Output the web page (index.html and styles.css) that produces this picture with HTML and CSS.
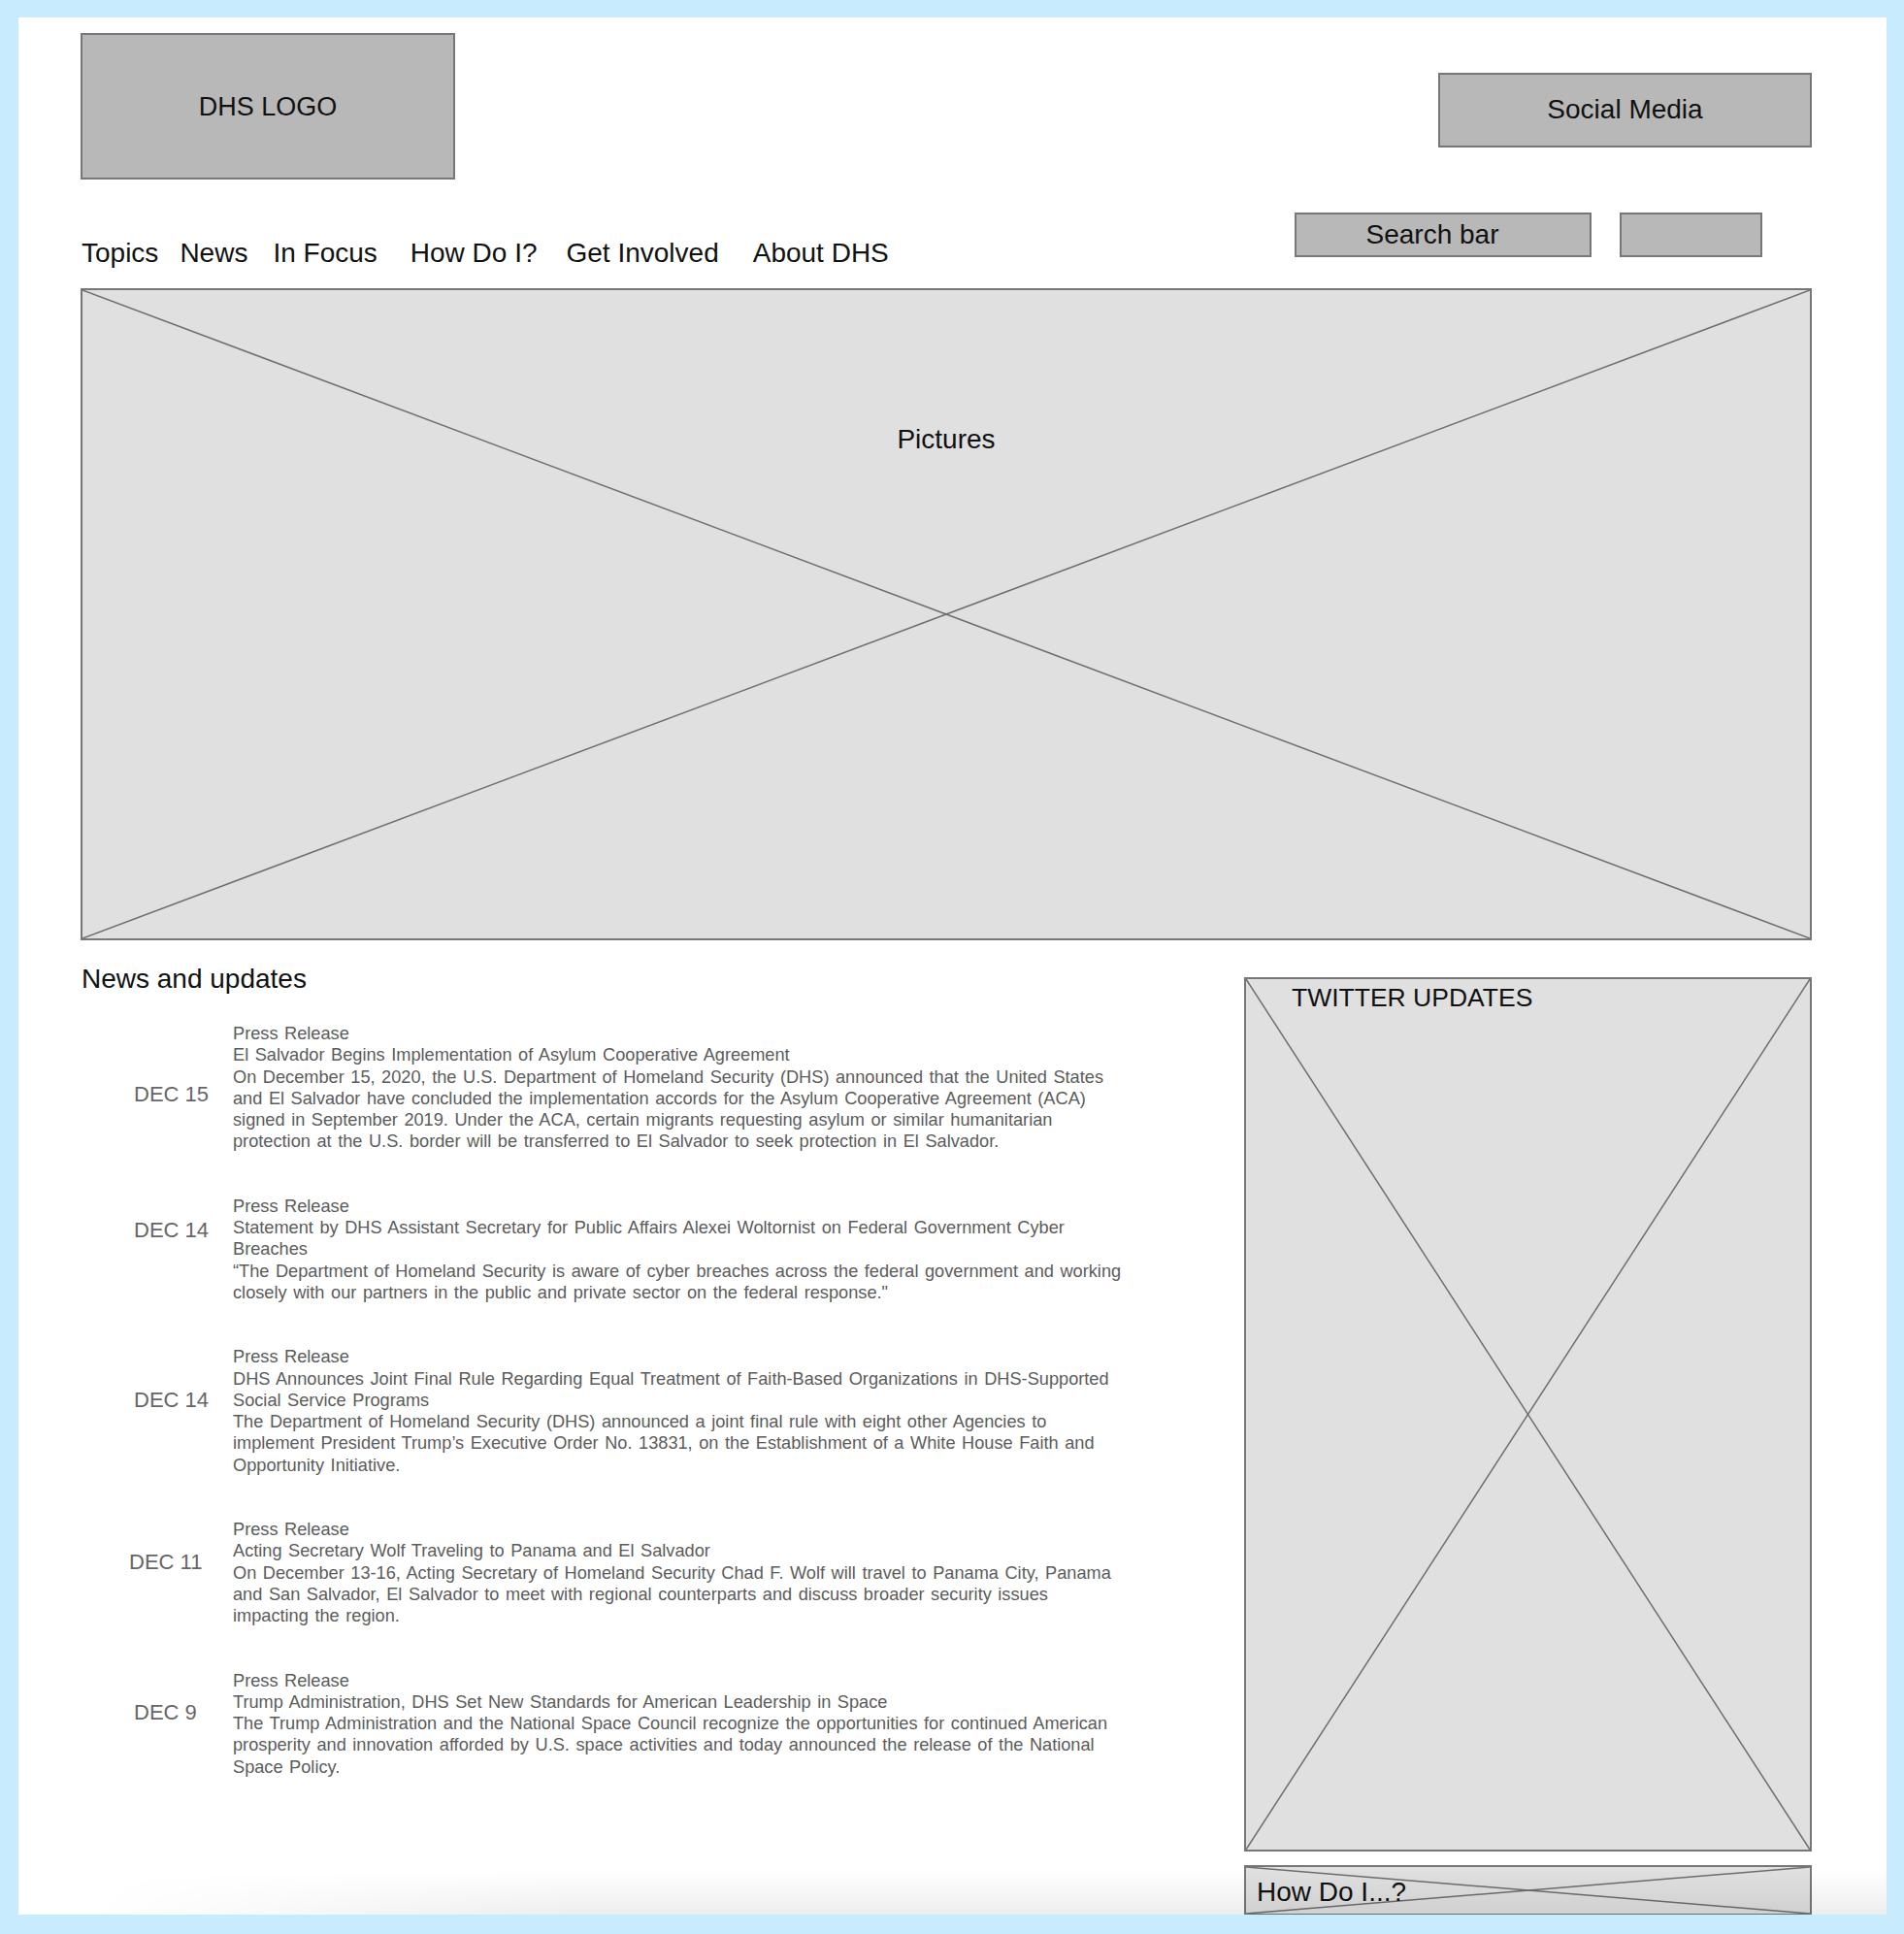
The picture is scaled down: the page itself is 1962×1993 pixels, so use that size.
FILE: index.html
```html
<!DOCTYPE html>
<html>
<head>
    <title>DHS Home - Wireframe</title>
    <link rel="stylesheet" href="styles.css">
</head>
<body>
    <div class="page">
        <header class="top">
            <div class="box logo">DHS LOGO</div>
            <div class="box social">Social Media</div>
        </header>

        <div class="navrow">
            <nav class="nav">
                <a href="#">Topics</a>
                <a href="#">News</a>
                <a href="#">In Focus</a>
                <a href="#">How Do I?</a>
                <a href="#">Get Involved</a>
                <a href="#">About DHS</a>
            </nav>
            <div class="search">
                <div class="box searchbar">Search bar</div>
                <div class="box search-btn"></div>
            </div>
        </div>

        <div class="placeholder hero">
            <svg class="cross" viewBox="0 0 100 100" preserveAspectRatio="none">
                <line x1="0" y1="0" x2="100" y2="100"/>
                <line x1="100" y1="0" x2="0" y2="100"/>
            </svg>
            <span class="hero-label">Pictures</span>
        </div>

        <div class="main">
            <section class="news">
                <h2>News and updates</h2>

                <div class="item">
                    <div class="date date-low">DEC 15</div>
                    <p class="text">Press Release<br>
                    El Salvador Begins Implementation of Asylum Cooperative Agreement<br>
                    On December 15, 2020, the U.S. Department of Homeland Security (DHS) announced that the United States<br>
                    and El Salvador have concluded the implementation accords for the Asylum Cooperative Agreement (ACA)<br>
                    signed in September 2019. Under the ACA, certain migrants requesting asylum or similar humanitarian<br>
                    protection at the U.S. border will be transferred to El Salvador to seek protection in El Salvador.</p>
                </div>

                <div class="item">
                    <div class="date date-high">DEC 14</div>
                    <p class="text">Press Release<br>
                    Statement by DHS Assistant Secretary for Public Affairs Alexei Woltornist on Federal Government Cyber<br>
                    Breaches<br>
                    &ldquo;The Department of Homeland Security is aware of cyber breaches across the federal government and working<br>
                    closely with our partners in the public and private sector on the federal response."</p>
                </div>

                <div class="item">
                    <div class="date">DEC 14</div>
                    <p class="text">Press Release<br>
                    DHS Announces Joint Final Rule Regarding Equal Treatment of Faith-Based Organizations in DHS-Supported<br>
                    Social Service Programs<br>
                    The Department of Homeland Security (DHS) announced a joint final rule with eight other Agencies to<br>
                    implement President Trump&rsquo;s Executive Order No. 13831, on the Establishment of a White House Faith and<br>
                    Opportunity Initiative.</p>
                </div>

                <div class="item">
                    <div class="date date-left">DEC 11</div>
                    <p class="text">Press Release<br>
                    Acting Secretary Wolf Traveling to Panama and El Salvador<br>
                    On December 13-16, Acting Secretary of Homeland Security Chad F. Wolf will travel to Panama City, Panama<br>
                    and San Salvador, El Salvador to meet with regional counterparts and discuss broader security issues<br>
                    impacting the region.</p>
                </div>

                <div class="item">
                    <div class="date">DEC 9</div>
                    <p class="text">Press Release<br>
                    Trump Administration, DHS Set New Standards for American Leadership in Space<br>
                    The Trump Administration and the National Space Council recognize the opportunities for continued American<br>
                    prosperity and innovation afforded by U.S. space activities and today announced the release of the National<br>
                    Space Policy.</p>
                </div>
            </section>

            <aside class="side">
                <div class="placeholder twitter">
                    <svg class="cross" viewBox="0 0 100 100" preserveAspectRatio="none">
                        <line x1="0" y1="0" x2="100" y2="100"/>
                        <line x1="100" y1="0" x2="0" y2="100"/>
                    </svg>
                    <span class="side-label">TWITTER UPDATES</span>
                </div>
                <div class="placeholder howdoi">
                    <svg class="cross" viewBox="0 0 100 100" preserveAspectRatio="none">
                        <line x1="0" y1="0" x2="100" y2="100"/>
                        <line x1="100" y1="0" x2="0" y2="100"/>
                    </svg>
                    <span class="howdoi-label">How Do I...?</span>
                </div>
            </aside>
        </div>
    </div>
</body>
</html>
```

FILE: styles.css
```css
body {
    margin: 0;
    padding: 18px 18px 20px 19px;
    background: #c8ecfd;
    font-family: "Liberation Sans", Arial, sans-serif;
    color: #111;
}
.page {
    position: relative;
    height: 1955px;
    overflow: hidden;
    box-sizing: border-box;
    padding: 16px 77px 0 64px;
    background: #fff;
}
/* faint shading along the bottom edge */
.page::after {
    content: "";
    position: absolute;
    left: 0;
    right: 0;
    bottom: 0;
    height: 45px;
    background: linear-gradient(to bottom, rgba(0, 0, 0, 0), rgba(0, 0, 0, 0.07));
    -webkit-mask-image: linear-gradient(to right, transparent 4%, #000 30%);
    mask-image: linear-gradient(to right, transparent 4%, #000 30%);
    pointer-events: none;
}

.box {
    box-sizing: border-box;
    background: #b8b8b8;
    border: 2px solid #777;
    display: flex;
    align-items: center;
    justify-content: center;
    font-size: 28px;
}

.top {
    display: flex;
    justify-content: space-between;
    align-items: flex-start;
}
.logo {
    width: 386px;
    height: 151px;
    padding-top: 2px;
    font-size: 27px;
}
.social {
    width: 385px;
    height: 77px;
    margin-top: 41px;
    padding-bottom: 2px;
}

.navrow {
    display: flex;
    justify-content: space-between;
    height: 112px;
}
.nav {
    align-self: flex-end;
    display: flex;
    gap: 30px;
    padding: 0 0 20px 1px;
    font-size: 28px;
    line-height: 32px;
}
.nav a {
    color: #111;
    text-decoration: none;
}
.nav a:nth-child(1) { margin-right: -8px; }
.nav a:nth-child(2) { margin-right: -4px; }
.nav a:nth-child(3) { margin-right: 4px; }
.nav a:nth-child(5) { margin-right: 5px; }
.search {
    display: flex;
    gap: 29px;
    margin: 34px 51px 0 0;
}
.searchbar {
    width: 306px;
    height: 46px;
    padding-right: 22px;
}
.search-btn {
    width: 147px;
    height: 46px;
}

.placeholder {
    position: relative;
    box-sizing: border-box;
    background: #e0e0e0;
    border: 2px solid #777;
    font-size: 28px;
    line-height: 32px;
}
.cross {
    position: absolute;
    top: 0;
    left: 0;
    width: 100%;
    height: 100%;
}
.cross line {
    stroke: #6e6e6e;
    stroke-width: 1.5;
    vector-effect: non-scaling-stroke;
}
.hero {
    height: 672px;
    text-align: center;
}
.hero-label,
.side-label,
.howdoi-label {
    position: relative;
    display: block;
}
.hero-label {
    padding-top: 138px;
}

.main {
    display: flex;
    align-items: flex-start;
}
.news {
    flex: 1;
    margin-top: 24px;
}
.news h2 {
    margin: 0 0 29px 1px;
    font-size: 28px;
    line-height: 32px;
    font-weight: normal;
}
.item {
    display: grid;
    grid-template-columns: 102px 1fr;
    padding-left: 55px;
    margin-bottom: 44px;
}
.date {
    align-self: center;
    margin-bottom: 22px;
    font-size: 22px;
    line-height: 26px;
    color: #666;
}
.date-low { margin: 14px 0 0; }
.date-high { margin-bottom: 40px; }
.date-left { margin-left: -5px; }
.text {
    margin: 0;
    font-size: 18.2px;
    line-height: 22.3px;
    word-spacing: 1.5px;
    color: #5c5c5c;
    white-space: nowrap;
}

.side {
    width: 585px;
    margin-top: 38px;
}
.twitter {
    height: 901px;
}
.side-label {
    padding: 3px 0 0 47px;
    font-size: 26.5px;
}
.howdoi {
    height: 52px;
    margin-top: 14px;
}
.howdoi-label {
    padding: 4px 0 0 11px;
    line-height: 44px;
}
```
